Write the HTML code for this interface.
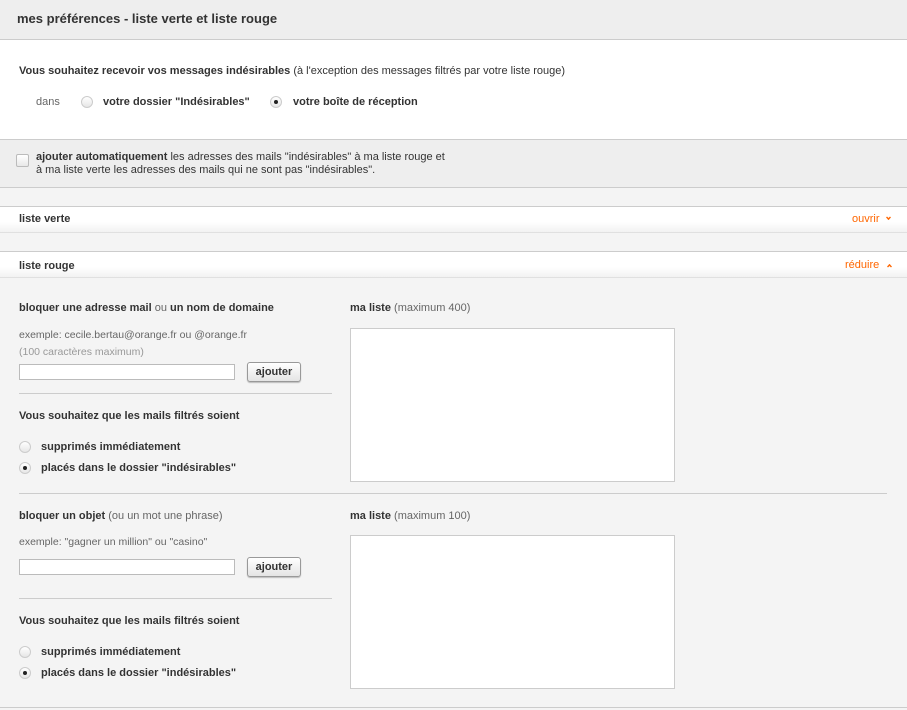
<!DOCTYPE html>
<html><head><meta charset="utf-8"><style>
*{box-sizing:border-box;margin:0;padding:0}
body{width:907px;height:710px;overflow:hidden;background:#f4f4f4;font-family:"Liberation Sans",sans-serif;font-size:11px;color:#333;position:relative}
.a{position:absolute;white-space:nowrap}
b{font-weight:bold}
.g{color:#666}.lg{color:#999}.o{color:#f60}
.radio{position:absolute;width:12px;height:12px;border-radius:50%;border:1px solid #ccc;background:linear-gradient(#fff,#e6e6e6)}
.radio.on::after{content:"";position:absolute;left:3px;top:3px;width:4px;height:4px;border-radius:50%;background:#222}
.inp{position:absolute;height:16px;border:1px solid #bbb;background:#fff}
.btn{position:absolute;width:54px;height:20px;border:1px solid #999;border-radius:3px;background:linear-gradient(#fff,#e4e4e4);font-weight:bold;font-size:11px;text-align:center;line-height:18px;box-shadow:0 1px 1px #bbb}
.ta{position:absolute;border:1px solid #ccc;background:#fff}
.hl{position:absolute;height:1px;background:#ccc}
.bar{position:absolute;left:0;width:907px;height:27px;background:linear-gradient(#fff 60%,#f2f2f2);border-top:1px solid #ccc;border-bottom:1px solid #e0e0e0}
.chev{display:inline-block;width:5px;height:5px;border-right:2px solid #f60;border-bottom:2px solid #f60;margin-left:6px;vertical-align:2px}
</style></head><body>
<div class="a" style="left:0;top:0;width:907px;height:40px;background:#eee;border-bottom:1px solid #ccc"></div>
<div class="a" style="left:17px;top:11px;font-size:13px;font-weight:bold;color:#333">mes préférences - liste verte et liste rouge</div>
<div class="a" style="left:0;top:40px;width:907px;height:100px;background:#fff;border-bottom:1px solid #ccc"></div>
<div class="a" style="left:19px;top:65px"><b>Vous souhaitez recevoir vos messages indésirables</b> (à l'exception des messages filtrés par votre liste rouge)</div>
<div class="a g" style="left:36px;top:96px">dans</div>
<div class="radio" style="left:81px;top:96px"></div>
<div class="a" style="left:103px;top:96px"><b>votre dossier "Indésirables"</b></div>
<div class="radio on" style="left:270px;top:96px"></div>
<div class="a" style="left:293px;top:96px"><b>votre boîte de réception</b></div>
<div class="a" style="left:0;top:140px;width:907px;height:48px;background:#eee;border-bottom:1px solid #ccc"></div>
<div class="a" style="left:16px;top:154px;width:13px;height:13px;border:1px solid #bbb;border-radius:2px;background:linear-gradient(#fff,#e8e8e8)"></div>
<div class="a" style="left:36px;top:151px;line-height:13px"><b>ajouter automatiquement</b> les adresses des mails "indésirables" à ma liste rouge et<br>à ma liste verte les adresses des mails qui ne sont pas "indésirables".</div>
<div class="bar" style="top:206px"></div>
<div class="a" style="left:19px;top:213px;font-weight:bold">liste verte</div>
<div class="a o" style="left:852px;top:213px">ouvrir<span class="chev" style="transform:rotate(45deg) scale(.7)"></span></div>
<div class="bar" style="top:251px"></div>
<div class="a" style="left:19px;top:260px;font-weight:bold">liste rouge</div>
<div class="a o" style="left:845px;top:259px">réduire<span class="chev" style="transform:rotate(225deg) scale(.7);vertical-align:-1px;margin-left:8px"></span></div>

<div class="a" style="left:19px;top:302px"><b>bloquer une adresse mail</b> <span class="g">ou</span> <b>un nom de domaine</b></div>
<div class="a g" style="left:19px;top:329px;font-size:10.5px">exemple: cecile.bertau@orange.fr ou @orange.fr</div>
<div class="a lg" style="left:19px;top:346px;font-size:10.5px">(100 caractères maximum)</div>
<div class="inp" style="left:19px;top:364px;width:216px"></div>
<div class="btn" style="left:247px;top:362px">ajouter</div>
<div class="hl" style="left:19px;top:393px;width:313px"></div>
<div class="a" style="left:19px;top:410px;font-weight:bold">Vous souhaitez que les mails filtrés soient</div>
<div class="radio" style="left:19px;top:441px"></div>
<div class="a" style="left:41px;top:441px;font-weight:bold">supprimés immédiatement</div>
<div class="radio on" style="left:19px;top:462px"></div>
<div class="a" style="left:41px;top:462px;font-weight:bold">placés dans le dossier "indésirables"</div>
<div class="a" style="left:350px;top:302px"><b>ma liste</b> <span class="g">(maximum 400)</span></div>
<div class="ta" style="left:350px;top:328px;width:325px;height:154px"></div>
<div class="hl" style="left:19px;top:493px;width:868px"></div>

<div class="a" style="left:19px;top:510px"><b>bloquer un objet</b> <span class="g">(ou un mot une phrase)</span></div>
<div class="a g" style="left:19px;top:536px;font-size:10.5px">exemple: "gagner un million" ou "casino"</div>
<div class="inp" style="left:19px;top:559px;width:216px"></div>
<div class="btn" style="left:247px;top:557px">ajouter</div>
<div class="hl" style="left:19px;top:598px;width:313px"></div>
<div class="a" style="left:19px;top:615px;font-weight:bold">Vous souhaitez que les mails filtrés soient</div>
<div class="radio" style="left:19px;top:646px"></div>
<div class="a" style="left:41px;top:646px;font-weight:bold">supprimés immédiatement</div>
<div class="radio on" style="left:19px;top:667px"></div>
<div class="a" style="left:41px;top:667px;font-weight:bold">placés dans le dossier "indésirables"</div>
<div class="a" style="left:350px;top:510px"><b>ma liste</b> <span class="g">(maximum 100)</span></div>
<div class="ta" style="left:350px;top:535px;width:325px;height:154px"></div>
<div class="hl" style="left:0;top:707px;width:907px"></div>
</body></html>
